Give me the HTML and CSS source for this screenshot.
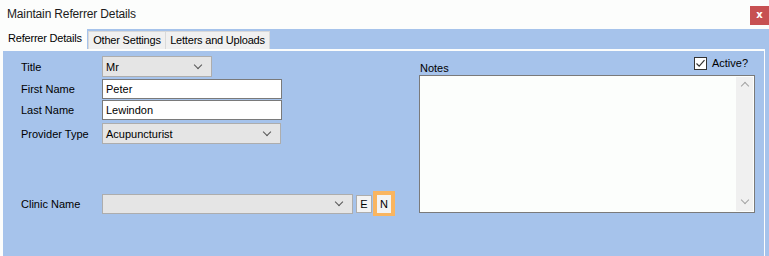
FILE: index.html
```html
<!DOCTYPE html>
<html lang="en">
<head>
  <meta charset="UTF-8">
  <title>Maintain Referrer Details</title>
  <link rel="stylesheet" href="styles.css">
</head>
<body>

  <div class="titlebar">
    <span class="title">Maintain Referrer Details</span>
    <button class="close">x</button>
  </div>

  <div class="tab-control">
    <div class="tab-strip">
      <div class="tab active">Referrer Details</div>
      <div class="tab tab-other">Other Settings</div>
      <div class="tab tab-letters">Letters and Uploads</div>
    </div>

    <div class="panel">
      <div class="form-left">
        <div class="row row-title">
          <label>Title</label>
          <div class="combo combo-small"><span>Mr</span><span class="chev"></span></div>
        </div>
        <div class="row row-first">
          <label>First Name</label>
          <div class="textbox">Peter</div>
        </div>
        <div class="row row-last">
          <label>Last Name</label>
          <div class="textbox">Lewindon</div>
        </div>
        <div class="row row-provider">
          <label>Provider Type</label>
          <div class="combo"><span>Acupuncturist</span><span class="chev"></span></div>
        </div>
        <div class="row row-clinic">
          <label>Clinic Name</label>
          <div class="combo combo-wide"><span></span><span class="chev"></span></div>
          <button class="mini">E</button>
          <div class="focus-ring"><button class="mini">N</button></div>
        </div>
      </div>

      <div class="form-right">
        <div class="notes-head">
          <span class="notes-label">Notes</span>
          <label class="check">
            <span class="box">
              <svg width="11" height="11" viewBox="0 0 11 11"><path d="M1.5 5.5 L4.2 8.2 L9.5 2.2" fill="none" stroke="#333" stroke-width="1.2"/></svg>
            </span>
            Active?
          </label>
        </div>
        <div class="notes">
          <div class="scrollbar">
            <span class="arrow up"></span>
            <span class="arrow down"></span>
          </div>
        </div>
      </div>
    </div>
  </div>

</body>
</html>
```

FILE: styles.css
```css
body {
  margin: 0;
  width: 769px;
  height: 256px;
  overflow: hidden;
  background: #fcfdfc;
  font-family: 'Liberation Sans', Arial, sans-serif;
  font-size: 11px;
  color: #000;
}

.titlebar {
  height: 29px;
  display: flex;
  align-items: flex-start;
  justify-content: space-between;
}

.title {
  margin: 7px 0 0 7px;
  font-size: 12px;
  letter-spacing: -0.15px;
  color: #1b1b1b;
}

.close {
  margin-top: 6px;
  width: 19px;
  height: 19px;
  border: none;
  padding: 0 0 3px;
  background: #c75052;
  color: #fff;
  font-family: 'DejaVu Sans', sans-serif;
  font-weight: bold;
  font-size: 10px;
}

.tab-control {
  margin-left: 3px;
  background: #a6c3eb;
  height: 227px;
}

.tab-strip {
  display: flex;
  height: 20px;
  align-items: flex-end;
}

.tab {
  height: 18px;
  line-height: 17px;
  background: #f0f0f0;
  border: 1px solid #d9d9d9;
  border-bottom: none;
  box-sizing: border-box;
  white-space: nowrap;
  text-align: center;
  letter-spacing: -0.2px;
}

.tab.active {
  height: 21px;
  width: 84px;
  background: #fcfdfc;
  border: none;
  line-height: 18px;
  text-align: left;
  padding-left: 5px;
  margin-bottom: -1px;
}

.tab-other { width: 78px; margin-left: 1px; }
.tab-letters { width: 105px; margin-left: -1px; }

.panel {
  height: 207px;
  width: 762px;
  box-sizing: border-box;
  border-top: 2px solid #fcfdfc;
  border-right: 1px solid #fcfdfc;
  display: flex;
  padding: 5px 0 0 18px;
}

.form-left {
  width: 374px;
  display: flex;
  flex-direction: column;
}

.row {
  display: flex;
  align-items: center;
}

.row label {
  width: 81px;
}

.row-first { margin-top: 2px; }
.row-last { margin-top: 1px; }
.row-provider { margin-top: 3px; }
.row-clinic { margin-top: 47px; }

.combo {
  width: 179px;
  height: 21px;
  box-sizing: border-box;
  background: #e5e5e5;
  border: 1px solid #adadad;
  display: flex;
  align-items: center;
  justify-content: space-between;
  padding: 0 10px 0 3px;
}

.combo-small { width: 110px; }
.combo-wide { width: 251px; height: 20px; }

.chev {
  width: 5px;
  height: 5px;
  border-right: 1px solid #555;
  border-bottom: 1px solid #555;
  transform: rotate(45deg);
  margin-top: -4px;
}

.textbox {
  width: 180px;
  height: 20px;
  box-sizing: border-box;
  background: #fff;
  border: 1px solid #7a7a7a;
  padding: 0 3px;
  line-height: 18px;
}

.mini {
  height: 18px;
  width: 16px;
  padding: 0;
  border: 1px solid #adadad;
  background: #f3f3f3;
  font-family: inherit;
  font-size: 11px;
  color: #000;
  margin-left: 3px;
}

.focus-ring {
  margin-left: 1px;
  width: 22px;
  height: 25px;
  box-sizing: border-box;
  background: #f9b560;
  display: flex;
  align-items: center;
  justify-content: center;
}

.focus-ring .mini {
  margin: 0;
  width: 14px;
  border: none;
  background: #f3f3f3;
}

.form-right {
  margin-left: 24px;
  width: 336px;
  display: flex;
  flex-direction: column;
}

.notes-head {
  height: 19px;
  display: flex;
  justify-content: space-between;
}

.notes-label {
  margin-top: 6px;
  margin-left: 1px;
}

.check {
  display: flex;
  align-items: center;
  gap: 5px;
  height: 14px;
  margin-right: 7px;
}

.box {
  width: 13px;
  height: 13px;
  box-sizing: border-box;
  border: 1px solid #333;
  background: #fff;
  display: flex;
  align-items: center;
  justify-content: center;
}

.notes {
  height: 138px;
  box-sizing: border-box;
  background: #fcfefc;
  border: 1px solid #7a7a7a;
  display: flex;
  justify-content: flex-end;
  padding: 1px;
}

.scrollbar {
  width: 17px;
  background: #f0f0f0;
  display: flex;
  flex-direction: column;
  justify-content: space-between;
  align-items: center;
  padding: 6px 0;
}

.arrow {
  width: 5px;
  height: 5px;
  border-left: 1px solid #a3a3a3;
  border-top: 1px solid #a3a3a3;
  transform: rotate(45deg);
}

.arrow.down {
  transform: rotate(225deg);
  margin-bottom: 2px;
}
```
